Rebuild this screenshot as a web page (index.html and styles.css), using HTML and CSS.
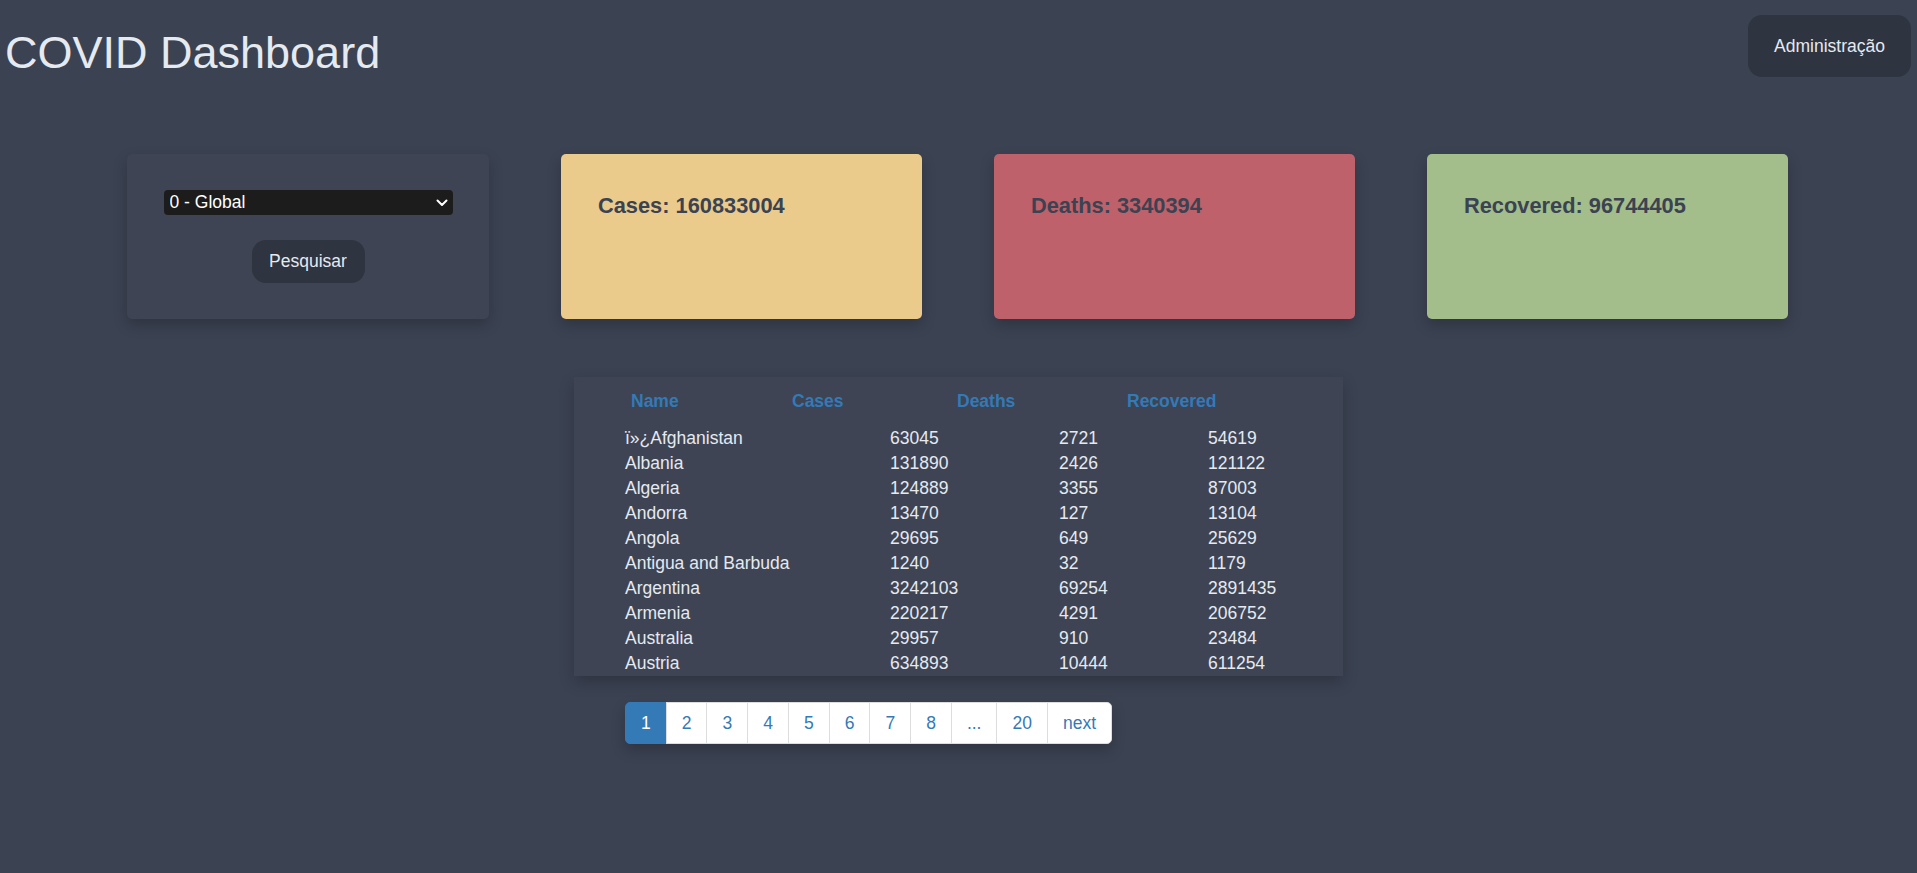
FILE: index.html
```html
<!DOCTYPE html>
<html lang="pt">
<head>
<meta charset="utf-8">
<title>COVID Dashboard</title>
<link rel="stylesheet" href="styles.css">
</head>
<body>
<header class="topbar">
  <h1 class="title">COVID Dashboard</h1>
  <button class="btn btn-admin">Administração</button>
</header>

<section class="cards">
  <div class="card card-filter">
    <div class="select-wrap">
      <select class="country-select">
        <option>0 - Global</option>
      </select>
      <svg class="chev" width="12" height="8" viewBox="0 0 12 8"><path d="M1.5 1.5 L6 6 L10.5 1.5" fill="none" stroke="#ffffff" stroke-width="2" stroke-linecap="round" stroke-linejoin="round"/></svg>
    </div>
    <button class="btn btn-search">Pesquisar</button>
  </div>
  <div class="card card-stat card-cases"><h3>Cases: 160833004</h3></div>
  <div class="card card-stat card-deaths"><h3>Deaths: 3340394</h3></div>
  <div class="card card-stat card-recovered"><h3>Recovered: 96744405</h3></div>
</section>

<section class="table-area">
  <div class="table-panel">
    <div class="thead">
      <span>Name</span><span>Cases</span><span>Deaths</span><span>Recovered</span>
    </div>
    <table class="data">
      <tbody>
        <tr><td>ï»¿Afghanistan</td><td>63045</td><td>2721</td><td>54619</td></tr>
        <tr><td>Albania</td><td>131890</td><td>2426</td><td>121122</td></tr>
        <tr><td>Algeria</td><td>124889</td><td>3355</td><td>87003</td></tr>
        <tr><td>Andorra</td><td>13470</td><td>127</td><td>13104</td></tr>
        <tr><td>Angola</td><td>29695</td><td>649</td><td>25629</td></tr>
        <tr><td>Antigua and Barbuda</td><td>1240</td><td>32</td><td>1179</td></tr>
        <tr><td>Argentina</td><td>3242103</td><td>69254</td><td>2891435</td></tr>
        <tr><td>Armenia</td><td>220217</td><td>4291</td><td>206752</td></tr>
        <tr><td>Australia</td><td>29957</td><td>910</td><td>23484</td></tr>
        <tr><td>Austria</td><td>634893</td><td>10444</td><td>611254</td></tr>
      </tbody>
    </table>
  </div>
  <ul class="pagination">
    <li class="active"><a>1</a></li>
    <li><a>2</a></li>
    <li><a>3</a></li>
    <li><a>4</a></li>
    <li><a>5</a></li>
    <li><a>6</a></li>
    <li><a>7</a></li>
    <li><a>8</a></li>
    <li><a>...</a></li>
    <li><a>20</a></li>
    <li><a>next</a></li>
  </ul>
</section>
</body>
</html>
```
FILE: styles.css
```css
html, body {
  margin: 0;
  padding: 0;
}
body {
  background: #3b4252;
  font-family: "Liberation Sans", Arial, sans-serif;
  font-size: 17.5px;
  color: #e5e9f0;
  min-height: 873px;
}
.topbar {
  display: flex;
  justify-content: space-between;
  align-items: flex-start;
  padding: 15px 6px 0 5px;
}
.title {
  margin: 13px 0 0 0;
  font-size: 45px;
  line-height: 50px;
  font-weight: normal;
  color: #e5e9f0;
}
.btn {
  font-family: "Liberation Sans", Arial, sans-serif;
  font-size: 17.5px;
  color: #e5e9f0;
  background: #2e3440;
  border: none;
  cursor: pointer;
}
.btn-admin {
  width: 163px;
  height: 62px;
  border-radius: 14px;
  padding: 0;
}
.cards {
  display: flex;
  gap: 72px;
  padding-left: 127px;
  margin-top: 76px;
}
.card {
  width: 361px;
  height: 165px;
  border-radius: 5px;
  box-sizing: border-box;
  box-shadow: 0 6px 14px rgba(0, 0, 0, 0.22);
}
.card-filter {
  width: 362px;
  background: #3e4454;
  display: flex;
  flex-direction: column;
  align-items: center;
  padding-top: 36px;
}
.select-wrap {
  position: relative;
  width: 289px;
  height: 25px;
}
.country-select {
  appearance: none;
  -webkit-appearance: none;
  width: 289px;
  height: 25px;
  background: #1c1c1c;
  color: #ffffff;
  border: none;
  border-radius: 4px;
  font-family: "Liberation Sans", Arial, sans-serif;
  font-size: 17.5px;
  padding: 0 0 0 6px;
  margin: 0;
  line-height: 25px;
}
.chev {
  position: absolute;
  right: 5px;
  top: 9px;
  pointer-events: none;
}
.btn-search {
  margin-top: 25px;
  width: 113px;
  height: 43px;
  border-radius: 14px;
  padding: 0;
}
.card-stat {
  padding: 40px 37px;
}
.card-stat h3 {
  margin: 0;
  font-size: 21.8px;
  line-height: 1.1;
  font-weight: bold;
  color: #3b4252;
}
.card-cases { background: #eacb8b; }
.card-deaths { background: #bf616a; }
.card-recovered { background: #a3bd8b; }

.table-area {
  width: 769px;
  margin: 58px auto 0;
}
.table-panel {
  background: #3e4454;
  box-shadow: 0 6px 14px rgba(0, 0, 0, 0.22);
  padding-top: 14px;
}
.thead {
  display: grid;
  grid-template-columns: 161px 165px 170px auto;
  padding-left: 57px;
  font-weight: bold;
  color: #337ab7;
  line-height: 20px;
  height: 20px;
  margin-bottom: 15px;
}
.data {
  border-collapse: collapse;
  margin-left: 51px;
  table-layout: fixed;
}
.data td {
  padding: 0;
  height: 25px;
  line-height: 25px;
  white-space: nowrap;
  color: #e5e9f0;
}
.data td:nth-child(1) { width: 265px; }
.data td:nth-child(2) { width: 169px; }
.data td:nth-child(3) { width: 149px; }
.data td:nth-child(4) { width: 100px; }

.pagination {
  display: inline-flex;
  list-style: none;
  margin: 26px 0 0 51px;
  padding: 0;
  border-radius: 5px;
  box-shadow: 0 6px 14px rgba(0, 0, 0, 0.22);
}
.pagination li a {
  display: block;
  padding: 7.5px 15px;
  line-height: 25px;
  color: #337ab7;
  background: #ffffff;
  border: 1px solid #dddddd;
  margin-left: -1px;
  font-size: 17.5px;
}
.pagination li:first-child a {
  margin-left: 0;
  border-radius: 5px 0 0 5px;
}
.pagination li:last-child a {
  border-radius: 0 5px 5px 0;
}
.pagination li.active a {
  background: #337ab7;
  border-color: #337ab7;
  color: #ffffff;
}
```
